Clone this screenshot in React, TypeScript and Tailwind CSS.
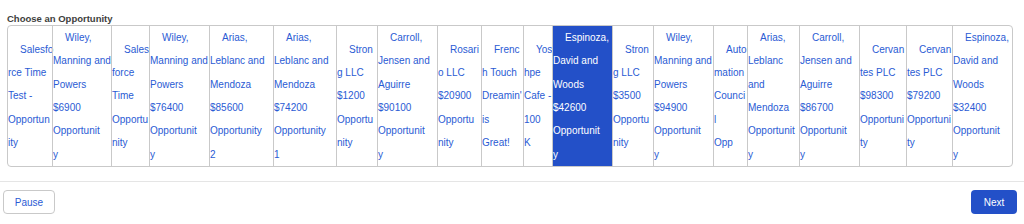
import React from "react";

type Choice = {
  width: string;
  lines: string[];
  selected?: boolean;
};

// line breaks follow the reference table's auto-sized columns
const choices: Choice[] = [
  { width: "w-[44px]", lines: ["Salesfo", "rce Time", "Test -", "Opportun", "ity"] },
  { width: "w-[59px]", lines: ["Wiley,", "Manning and", "Powers", "$6900", "Opportunit", "y"] },
  { width: "w-[38px]", lines: ["Sales", "force", "Time", "Opportu", "nity"] },
  { width: "w-[60px]", lines: ["Wiley,", "Manning and", "Powers", "$76400", "Opportunit", "y"] },
  { width: "w-[64px]", lines: ["Arias,", "Leblanc and", "Mendoza", "$85600", "Opportunity", "2"] },
  { width: "w-[63px]", lines: ["Arias,", "Leblanc and", "Mendoza", "$74200", "Opportunity", "1"] },
  { width: "w-[41px]", lines: ["Stron", "g LLC", "$1200", "Opportu", "nity"] },
  { width: "w-[60px]", lines: ["Carroll,", "Jensen and", "Aguirre", "$90100", "Opportunit", "y"] },
  { width: "w-[44px]", lines: ["Rosari", "o LLC", "$20900", "Opportu", "nity"] },
  { width: "w-[42px]", lines: ["Frenc", "h Touch", "Dreamin'", "is", "Great!"] },
  { width: "w-[29px]", lines: ["Yos", "hpe", "Cafe -", "100", "K"] },
  { width: "w-[60px]", lines: ["Espinoza,", "David and", "Woods", "$42600", "Opportunit", "y"], selected: true },
  { width: "w-[41px]", lines: ["Stron", "g LLC", "$3500", "Opportu", "nity"] },
  { width: "w-[60px]", lines: ["Wiley,", "Manning and", "Powers", "$94900", "Opportunit", "y"] },
  { width: "w-[34px]", lines: ["Auto", "mation", "Counci", "l", "Opp"] },
  { width: "w-[52px]", lines: ["Arias,", "Leblanc", "and", "Mendoza", "Opportunit", "y"] },
  { width: "w-[60px]", lines: ["Carroll,", "Jensen and", "Aguirre", "$86700", "Opportunit", "y"] },
  { width: "w-[47px]", lines: ["Cervan", "tes PLC", "$98300", "Opportuni", "ty"] },
  { width: "w-[46px]", lines: ["Cervan", "tes PLC", "$79200", "Opportuni", "ty"] },
  { width: "flex-1", lines: ["Espinoza,", "David and", "Woods", "$32400", "Opportunit", "y"] },
];

function ChoiceCell({ choice, first }: { choice: Choice; first: boolean }) {
  return (
    <div
      className={`${choice.width} shrink-0 flex flex-col justify-center overflow-visible ${
        first ? "" : "border-l border-[#c9c9c9]"
      } ${choice.selected ? "bg-[#2350c8] text-white" : "text-[#2a5bd4]"}`}
    >
      {choice.lines.map((line, i) => (
        <div
          key={i}
          className={`whitespace-nowrap leading-[23.33px] ${i === 0 ? "pl-[12px]" : ""}`}
        >
          {line}
        </div>
      ))}
    </div>
  );
}

export default function App() {
  return (
    <div className="w-full h-[224px] bg-white font-['Liberation_Sans',Arial,sans-serif]">
      <div className="pt-[13px] px-[7px]">
        <div className="h-[12px] leading-[12px] text-[9.5px] font-bold text-[#3e3e3c]">
          Choose an Opportunity
        </div>
        <div className="flex w-[1006px] h-[142px] border border-[#c9c9c9] rounded-[4px] overflow-hidden text-[10px]">
          {choices.map((c, i) => (
            <ChoiceCell key={i} choice={c} first={i === 0} />
          ))}
        </div>
      </div>

      <div className="mt-[14px] border-t border-[#e5e5e5] flex items-center justify-between pl-[3px] pr-[7px] pt-[8px]">
        <button className="w-[52px] h-[24px] rounded-[4px] border border-[#c9c9c9] bg-white text-[10px] text-[#2a5bd4]">
          Pause
        </button>
        <button className="w-[46px] h-[24px] rounded-[4px] bg-[#2350c8] text-[10px] text-white">
          Next
        </button>
      </div>
    </div>
  );
}
